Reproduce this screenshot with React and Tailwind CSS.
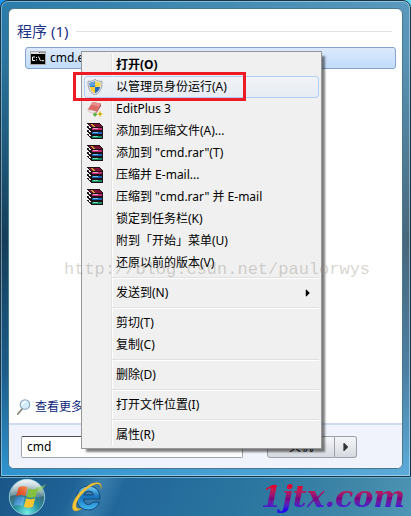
import React from 'react';
import { FaCaretRight } from 'react-icons/fa';

/* ── menu icons ── */
function ShieldIcon() {
  return (
    <svg viewBox="0 0 16 16" className="h-4 w-4">
      <defs>
        <clipPath id="shield">
          <path d="M8 2C9.6 3.3 11.4 3.8 13.5 3.7C13.7 8.6 12.2 12.4 8 14.2C3.8 12.4 2.3 8.6 2.5 3.7C4.6 3.8 6.4 3.3 8 2Z" />
        </clipPath>
      </defs>
      <path d="M8 .3C9.8 2 12 2.4 15 2.2C15.3 9 13.4 13.8 8 16C2.6 13.8 .7 9 1 2.2C4 2.4 6.2 2 8 .3Z" fill="#dde1e3" stroke="#858f97" strokeWidth=".7" />
      <g clipPath="url(#shield)">
        <path d="M0 0H8V8H0Z" fill="#2f7bcb" />
        <path d="M8 0H16V8H8Z" fill="#fbd84a" />
        <path d="M0 8H8V16H0Z" fill="#f8cb35" />
        <path d="M8 8H16V16H8Z" fill="#2869b8" />
        <path d="M3 4Q6 4 8 2V6Q5 8 3 7Z" fill="#79b7ef" opacity=".6" />
      </g>
    </svg>
  );
}

function EditPlusIcon() {
  return (
    <svg viewBox="0 0 16 16" className="h-4 w-4">
      <path d="M5.5 1L14 2.5L9.5 10.5L.8 8.500Z" fill="#de6a66" />
      <path d="M5.500 1L14 2.500L12.300 5.500L4 3.800Z" fill="#eb9089" />
      <path d="M.8 8.500L9.500 10.500L9 12.500L2 10.800Z" fill="#f3efee" stroke="#c9a3a2" strokeWidth=".5" />
      <path d="M9.500 10.500L14 2.500V5L9.200 12.700Z" fill="#b54a4b" />
      <path d="M8 11.500V15.500M6 13.500H10" stroke="#4fae35" strokeWidth="1.5" />
      <path d="M13 10.500V15.500M10.500 13H15.500" stroke="#eec21d" strokeWidth="1.6" />
      <path d="M13 12V14M12 13H14" stroke="#7fae25" strokeWidth=".8" />
    </svg>
  );
}

function RarIcon() {
  return (
    <svg viewBox="0 0 16 16" className="h-4 w-4" shapeRendering="crispEdges">
      <path d="M0 0H12L16 4V16H5L0 12Z" fill="#1d1016" />
      <path d="M1 1H12L15 4H5Z" fill="#7c0f36" />
      <path d="M3 1H5L8 4H6Z" fill="#c8a62e" />
      <path d="M0 1L4 5V7L0 3Z M0 5L4 9V11L0 7Z M0 9L4 13V15L0 11Z" fill="#f6f6f6" />
      <path d="M1 3H2V4H1Z M3 5H4V6H3Z M1 7H2V8H1Z M3 9H4V10H3Z M1 11H2V12H1Z M3 13H4V14H3Z" fill="#333" />
      <path d="M5 5H15V7H5Z" fill="#c02a70" />
      <path d="M6 5H11V6H6Z" fill="#ee9cc3" />
      <path d="M5 9H15V11H5Z" fill="#1763b7" />
      <path d="M6 9H11V10H6Z" fill="#6db8ee" />
      <path d="M5 13H15V15H5Z" fill="#148a62" />
      <path d="M6 13H11V14H6Z" fill="#6adcab" />
    </svg>
  );
}

function ConsoleIcon() {
  return (
    <svg viewBox="0 0 16 14" className="h-[14px] w-4 shrink-0">
      <path d="M0 0H16V14H0Z" fill="#a9a9a9" />
      <path d="M1 1H15V3H1Z" fill="#dcdcdc" />
      <path d="M9 1.5H10.5M11.5 1.5H12.5M13.5 1.5H14.5" stroke="#555" />
      <path d="M1 3H15V13H1Z" fill="#000" />
      <path d="M5 6H2.5V9.500H5M6.500 6V7M6.500 8.500V9.500M8.500 5.500L10.500 10M11.500 9.700H14" fill="none" stroke="#fff" />
    </svg>
  );
}

function SearchIcon() {
  return (
    <svg viewBox="0 0 16 16" className="h-4 w-4 shrink-0">
      <path d="M5.500 9.500L.8 15" stroke="#8c8276" strokeWidth="1.8" strokeLinecap="round" />
      <circle cx="8" cy="5.500" r="4.800" fill="#d3ecfb" stroke="#8ba7bd" strokeWidth="1.1" />
      <path d="M5 5.500Q6 2.800 8.800 2.400" fill="none" stroke="#fff" strokeWidth="1.5" />
    </svg>
  );
}

function StartOrb() {
  return (
    <svg viewBox="0 0 38 38" className="h-[38px] w-[38px]">
      <defs>
        <radialGradient id="orb" cx=".5" cy=".95" r=".9">
          <stop offset="0" stopColor="#6ff0e6" />
          <stop offset=".4" stopColor="#28909f" />
          <stop offset=".7" stopColor="#3b6c7c" />
          <stop offset="1" stopColor="#a7c4cb" />
        </radialGradient>
        <linearGradient id="gloss" x2="0" y2="1">
          <stop offset="0" stopColor="#fff" stopOpacity=".8" />
          <stop offset="1" stopColor="#fff" stopOpacity=".15" />
        </linearGradient>
        <linearGradient id="red" x1="1" x2="0" y2="1">
          <stop offset="0" stopColor="#f58a4d" />
          <stop offset="1" stopColor="#d83a1c" />
        </linearGradient>
        <linearGradient id="blue" x2="1" y2="1">
          <stop offset="0" stopColor="#2569b8" />
          <stop offset="1" stopColor="#7cc8f0" />
        </linearGradient>
      </defs>
      <circle cx="19" cy="19" r="17.7" fill="url(#orb)" stroke="#8fc7d5" />
      <path d="M2.5 18A16.5 16.5 0 0 1 35.5 18Q27 21 19 18Q11 16 2.5 18Z" fill="url(#gloss)" />
      <path d="M28 9Q33 10 38 6Q35 12 30 15Z" fill="#8fd45a" opacity=".6" />
      <path d="M10.500 9.500Q15 7 19.500 9.500L17.200 18Q13 16 8.200 18.200Z" fill="url(#red)" />
      <path d="M20.800 10.300Q25 12.500 30 10L27.700 18.700Q23 21 18.500 18.700Z" fill="#84c141" />
      <path d="M7.800 19.600Q12.500 17.500 16.800 19.500L14.500 28Q10 25.800 5.700 28Z" fill="url(#blue)" />
      <path d="M18.100 20.200Q22.500 22.500 27.200 20.200L24.900 28.700Q20 31 15.900 28.700Z" fill="#fac62f" />
    </svg>
  );
}

function ExplorerIcon() {
  return (
    <svg viewBox="0 0 34 32" className="h-8 w-[34px]">
      <defs>
        <linearGradient id="ie" x2="0" y2="1">
          <stop offset="0" stopColor="#7bd2f7" />
          <stop offset=".45" stopColor="#1673bd" />
          <stop offset="1" stopColor="#43b8ef" />
        </linearGradient>
      </defs>
      <path d="M30 18H13.500Q14 23.500 18.500 23.500Q21.500 23.500 23 21H29.500Q26.500 29 18.500 29Q7 28.500 6.500 17Q7 5.500 18.500 5Q30.500 5.500 30 18ZM13.700 14H23.500Q23 10 18.700 10Q14.500 10 13.700 14Z" fill="url(#ie)" stroke="#0d3e74" strokeWidth=".9" fillRule="evenodd" />
      <path d="M31 8C33 1 27 0 20 3.500C10 9 1.500 20 2.500 27C3 31 7.500 30.500 12 27.500C7.500 28.500 5 27 6.500 22C9.500 14 18 6 25 3.500C29 2.300 31.500 3.500 31 8Z" fill="#f5c737" stroke="#bd922a" strokeWidth=".4" />
    </svg>
  );
}

/* ── context menu ── */
const GROUPS = [
  [
    { label: '打开(O)', bold: true },
    { label: '以管理员身份运行(A)', icon: <ShieldIcon />, active: true },
    { label: 'EditPlus 3', icon: <EditPlusIcon /> },
    { label: '添加到压缩文件(A)...', icon: <RarIcon /> },
    { label: '添加到 "cmd.rar"(T)', icon: <RarIcon /> },
    { label: '压缩并 E-mail...', icon: <RarIcon /> },
    { label: '压缩到 "cmd.rar" 并 E-mail', icon: <RarIcon /> },
    { label: '锁定到任务栏(K)' },
    { label: '附到「开始」菜单(U)' },
    { label: '还原以前的版本(V)' },
  ],
  [{ label: '发送到(N)', submenu: true }],
  [{ label: '剪切(T)' }, { label: '复制(C)' }],
  [{ label: '删除(D)' }],
  [{ label: '打开文件位置(I)' }],
  [{ label: '属性(R)' }],
];

function MenuItem({ item }) {
  return (
    <li className="relative">
      <button
        type="button"
        className={`flex h-[22px] w-full items-center rounded-[3px] border pr-1 text-left whitespace-nowrap ${
          item.active ? 'border-[#aecff7] bg-linear-to-b from-[#f1f3f6] to-[#e6ecf5]' : 'border-transparent'
        } ${item.bold ? 'font-bold' : ''}`}
      >
        <span className="flex w-[31px] shrink-0 pl-0.5">{item.icon}</span>
        <span className="flex-1">{item.label}</span>
        {item.submenu && <FaCaretRight className="h-3 w-3 text-black" />}
      </button>
      {item.active && (
        <span className="pointer-events-none absolute -top-1 -left-[11px] h-[29px] w-[173px] border-3 border-[#ed1c24]" />
      )}
    </li>
  );
}

function ContextMenu() {
  return (
    <div className="absolute top-[51px] left-[81px] w-[241px] border border-[#979797] bg-[#f0f0f0] p-0.5 text-xs text-black shadow-[4px_4px_2px_-1px_rgba(0,0,0,0.5)]">
      <div className="relative">
        <span className="absolute inset-y-0 left-[27px] w-0.5 border-r border-l border-r-white border-l-[#e2e3e3]" />
        {GROUPS.map((group, i) => (
          <ul key={i} className="relative">
            {i > 0 && (
              <li className="flex h-2 items-center pl-7">
                <span className="h-0.5 w-full border-t border-b border-t-[#e0e0e0] border-b-white" />
              </li>
            )}
            {group.map((item) => (
              <MenuItem key={item.label} item={item} />
            ))}
          </ul>
        ))}
      </div>
    </div>
  );
}

export default function App() {
  return (
    <div className="relative flex min-h-screen flex-col overflow-hidden bg-linear-to-r from-[#1d95f0] to-[#5fdcf5] font-['Noto_Sans','Noto_Sans_CJK_SC',sans-serif]">
      {/* start menu */}
      <div className="flex flex-1 flex-col rounded-t-lg border border-[#14374c] bg-[linear-gradient(to_right,rgba(255,255,255,0),rgba(255,255,255,0.22)),linear-gradient(to_bottom,#2b7dab,#2a75a0_12%,#143d57_50%,#1b5c8a_78%,#2f95d0)]">
        <div className="flex flex-1 flex-col rounded-t-[7px] border border-white/40 p-1.5">
          <main className="flex flex-1 flex-col overflow-hidden rounded-md border border-[#4b7891] bg-white">
            <section className="flex flex-1 flex-col pt-3 pr-1.5 pl-2">
              <h1 className="mr-1 flex items-center gap-2 text-[15px] leading-5 text-[#1e3287]">
                程序 (1)
                <span className="h-px flex-1 bg-[#e2e2e2]" />
              </h1>
              <a href="#cmd" className="mt-1.5 ml-2 flex h-[22px] items-center gap-1 rounded-[3px] border border-[#84a4cf] bg-linear-to-b from-[#dce9fc] to-[#c1dcfc] px-1 text-xs text-black">
                <ConsoleIcon />
                cmd.exe
              </a>
              <a href="#more" className="mt-auto mb-1.5 flex items-center gap-0.5 text-xs leading-5 text-[#0d1f7c]">
                <SearchIcon />
                查看更多结果
              </a>
            </section>
            <footer className="flex h-[45px] items-center border-t-2 border-[#cfdcef] bg-[#f0f3fb] px-3 text-xs">
              <input aria-label="搜索" defaultValue="cmd" className="h-[22px] w-[222px] rounded-xs border border-[#a0a3a8] border-t-[#4c4e52] bg-white px-[5px] outline-none" />
              <button type="button" className="ml-6 h-[22px] w-[68px] rounded-l-[3px] border border-[#9ca1a9] bg-linear-to-b from-[#f5f6f9] to-[#d6dae0]">关机</button>
              <button type="button" aria-label="关机选项" className="flex h-[22px] w-[22px] items-center justify-center rounded-r-[3px] border border-l-0 border-[#9ca1a9] bg-linear-to-b from-[#f5f6f9] to-[#d6dae0]">
                <FaCaretRight className="h-3.5 w-3.5 text-[#333]" />
              </button>
            </footer>
          </main>
        </div>
      </div>

      {/* taskbar */}
      <div className="flex h-[39px] items-center border-t border-[#69adcb] bg-[linear-gradient(115deg,#1b5688,#1f6296_18%,#3a7fac_24%,#22679a_30%,#2a76a0_60%,#4187a8_85%,#4f95b5)] pr-1.5 pl-2">
        <button type="button" aria-label="开始"><StartOrb /></button>
        <button type="button" aria-label="Internet Explorer" className="ml-6"><ExplorerIcon /></button>
        <span className="ml-auto bg-linear-to-b from-[#e4002b] from-20% via-[#7d0082] via-55% to-[#2500ee] to-85% bg-clip-text font-['DejaVu_Serif',serif] text-[30px] leading-9 font-bold text-transparent italic">
          1jtx.com
        </span>
      </div>

      <ContextMenu />
      <span className="pointer-events-none absolute top-[258px] left-16 font-['Liberation_Mono',monospace] text-[17px] leading-6 text-[#8a8578]/35">
        http://blog.csdn.net/paulorwys
      </span>
    </div>
  );
}
